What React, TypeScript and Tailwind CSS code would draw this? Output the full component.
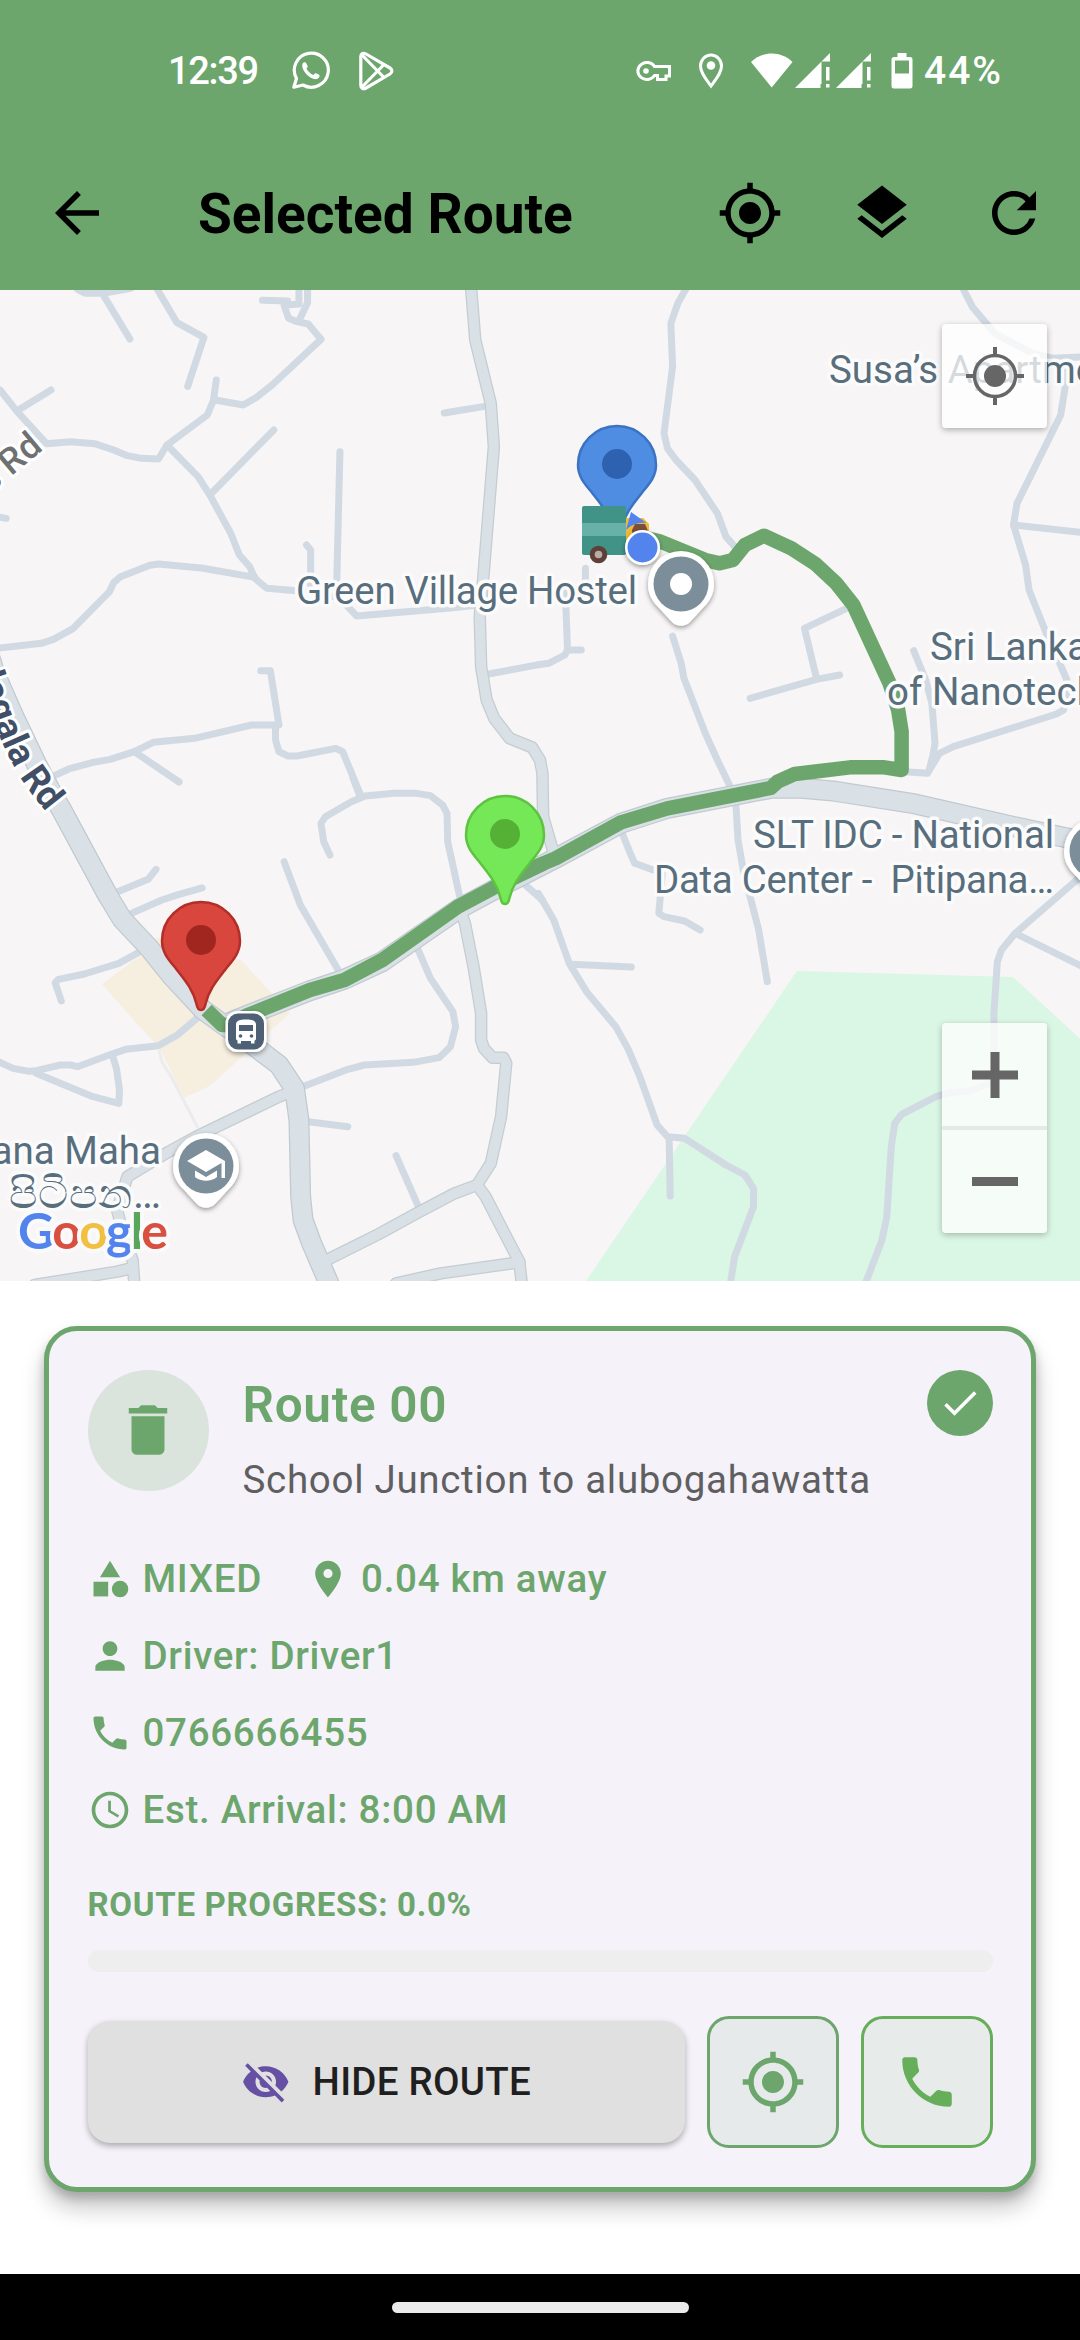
import type { ReactNode } from 'react';
import {
  MdAccessTime,
  MdArrowBack,
  MdCategory,
  MdCheck,
  MdDelete,
  MdLayers,
  MdLocationOn,
  MdMyLocation,
  MdPerson,
  MdPhone,
  MdRefresh,
  MdVisibilityOff,
} from 'react-icons/md';

const ROUTE_GREEN = '#6ca66d';

/* The map is split in four tiles; road points are in tile units. */
type Tile = {
  transform: string;
  minor: string[];
  medium: string[];
  major: string[];
  route: string;
};

const TILES: Tile[] = [
  {
    transform: 'matrix(0.34439 0 0 0.33333 0 0)',
    minor: [
      '225,-2 248,10 300,10 380,-5',
      '300,15 377,147',
      '455,-5 514,98 592,142 545,289',
      '762,31 835,33',
      '868,-5 868,42 825,46 838,85 862,95 895,102 932,148 790,285 745,322 706,345 625,330',
      '893,-5 893,38 868,92',
      '628,270 620,330 602,375 485,465 460,507 410,505 370,497 330,480 275,461 205,455 135,461 50,365 0,300',
      '50,362 148,300',
      '485,465 575,560 612,620 670,730 695,795 725,830 740,865 775,895 860,902 940,910 985,925',
      '612,612 795,420',
      '987,485 978,870 985,920 1010,950 1035,978 1300,955 1390,945',
      '890,765 902,780 902,900',
      '-10,680 18,685',
      '-10,1075 120,1060 155,1048 213,1015 318,905 330,878 350,860 435,826 460,822 585,834 740,862',
      '1290,369 1420,347',
      '1420,1152 1568,1123',
      '757,1142 785,1142 810,1305 730,1305 565,1345 445,1357 390,1385 320,1408 270,1417 200,1437 140,1465',
      '390,1385 520,1476',
      '800,1305 800,1350 810,1385 835,1398 862,1398 975,1375 995,1385 1045,1510',
    ],
    medium: [
      '1368,-5 1380,150 1425,340 1434,470 1402,880 1393,980 1397,1130 1413,1230 1435,1285 1480,1345 1545,1372 1568,1410 1575,1450 1577,1580 1605,1680',
    ],
    major: ['-45,1050 -15,1150 45,1290 105,1420 150,1510 178,1558 315,1820'],
    route: '',
  },
  {
    transform: 'matrix(0.34439 0 0 0.33333 540 0)',
    minor: [
      '-5,1124 25,1120 72,1095 80,1080 75,945 75,900',
      '80,1080 120,1080',
      '132,835 132,880',
      '425,-5 400,40 380,100 385,230 360,430 370,475 395,510 450,570 515,670 540,740 570,775',
      '1228,-5 1255,50 1320,130 1430,190 1490,205 1580,200',
      '1525,205 1525,290 1512,375 1385,640 1375,705 1410,825 1420,900 1470,1030 1505,1110 1530,1170 1530,1230 1520,1260 1500,1272 1200,1370 1160,1390 1125,1450 1060,1445',
      '1375,705 1580,728',
      '1085,1082 1120,1170 1138,1240 1147,1360 1140,1400 1130,1440',
      '895,953 768,1015 803,1165',
      '610,1225 803,1168 870,1155',
      '385,1038 410,1120 418,1165 480,1330 515,1410 550,1485 560,1510',
    ],
    medium: [],
    major: [],
    route:
      '290,740 350,755 480,810 522,820 560,810 595,765 650,737 730,775 800,822 860,880 910,945 1015,1180 1040,1260 1050,1325 1050,1440 1000,1432 900,1432 740,1452 690,1475 670,1494 370,1555 235,1597 45,1705 -110,1772',
  },
  {
    transform: 'matrix(0.34439 0 0 0.33333 0 490)',
    minor: [
      '335,338 430,298 453,268',
      '375,403 470,360 520,343 587,324',
      '415,510 345,550 245,582 170,598 160,608 178,663',
      '585,703 515,765 460,797 365,808 325,822 225,860 205,855 175,855 105,872 85,874 38,865 -5,845',
      '105,880 270,950 345,970 347,930 338,865 327,828',
      '958,225 940,185 932,130 945,110 1020,65 1060,48 1145,40 1210,40 1250,47 1285,75 1298,100 1300,185 1335,350',
      '1025,-5 1045,48',
      '825,245 872,375 985,575',
      '1210,500 1250,595 1315,695 1323,740 1308,800 1275,833 1200,847 1058,855 1010,868 875,922',
      '895,1025 1010,1040',
      '1150,1127 1215,1280',
      '1520,310 1575,360',
    ],
    medium: [
      '1335,385 1350,430 1375,560 1397,700 1397,780 1405,805 1430,833 1462,833 1470,850 1455,1010 1425,1150 1385,1215 1320,1240 1210,1300 1100,1362 945,1442',
      '1385,1215 1410,1250 1485,1400 1508,1445 1515,1510',
      '1508,1447 1280,1480 1150,1510',
      '845,935 810,950 570,1070 490,1115 370,1190 340,1290 360,1370 385,1440 390,1510',
      '380,1465 340,1475 100,1515',
    ],
    major: [
      '45,-180 105,-50 150,38 178,88 315,350 355,418 432,503 500,590 590,690 650,735 740,800 810,855 855,925 868,1020 873,1250 880,1320 905,1390 955,1510',
    ],
    route: '600,690 645,735 665,735 720,705 900,630 1000,600 1110,540 1330,380 1430,325 1580,250',
  },
  {
    transform: 'matrix(0.34439 0 0 0.33333 540 490)',
    minor: [
      '568,60 575,180 590,270 635,450 660,605',
      '235,150 260,215 275,250 355,280 345,400 360,410 420,423 465,450',
      '-5,340 40,420 85,550 135,635 220,740 255,805 290,890 340,1035 370,1070 420,1075 540,1155 595,1185 620,1225 620,1280 565,1430 553,1510',
      '90,553 265,561',
      '375,1075 378,1248',
      '1575,285 1380,460 1340,510 1328,545 1318,700 1318,905 1250,932 1190,938 1150,950 1050,1003 1030,1030 1020,1100 1007,1310 993,1380 945,1510',
      '1380,460 1580,562',
    ],
    medium: [],
    major: [
      '-918,735 -848,705 -668,632 -568,598 -458,545 -238,388 -138,332 45,235 235,130 370,85 670,25 760,25 850,33 1080,70 1400,145 1580,185',
    ],
    route: '',
  },
];

function Roads({
  kind,
  color,
  width,
}: {
  kind: 'minor' | 'medium' | 'major';
  color: string;
  width: number;
}) {
  return (
    <g fill="none" stroke={color} strokeWidth={width} strokeLinecap="round" strokeLinejoin="round">
      {TILES.map((tile) => (
        <g key={tile.transform} transform={tile.transform}>
          {tile[kind].map((points) => (
            <polyline key={points} points={points} vectorEffect="non-scaling-stroke" />
          ))}
        </g>
      ))}
    </g>
  );
}

function MarkerPin({ x, y, fill, stroke, dot }: { x: number; y: number; fill: string; stroke: string; dot: string }) {
  return (
    <g transform={`translate(${x} ${y})`}>
      <path
        d="M0 -1C-2.500 -1 -3.800 -3 -4.500 -7C-8 -22 -17 -32 -25.500 -43C-33 -52 -39 -59 -39 -70A39 39 0 0 1 39 -70C39 -59 33 -52 25.500 -43C17 -32 8 -22 4.500 -7C3.800 -3 2.500 -1 0 -1Z"
        fill={fill}
        stroke={stroke}
        strokeWidth="2.500"
      />
      <circle cy="-71" r="15" fill={dot} />
    </g>
  );
}

function PlacePin({ x, y, children }: { x: number; y: number; children: ReactNode }) {
  return (
    <g transform={`translate(${x} ${y})`}>
      <path
        d="M-33 0A33 33 0 1 1 33 0C33 11 28 18 21 25L9 38C4 43 -4 43 -9 38L-21 25C-28 18 -33 11 -33 0Z"
        fill="#fff"
        filter="url(#soft)"
      />
      <circle r="27.500" fill="#7c8e9a" />
      {children}
    </g>
  );
}

function Label({
  x,
  y,
  length,
  size = 38.5,
  anchor = 'start',
  children,
}: {
  x: number;
  y: number;
  length?: number;
  size?: number;
  anchor?: 'start' | 'end';
  children: string;
}) {
  return (
    <text
      x={x}
      y={y}
      textLength={length}
      textAnchor={anchor}
      fontSize={size}
      fill="#586e7c"
      stroke="#fbfbfc"
      strokeWidth="7"
      strokeLinejoin="round"
      paintOrder="stroke"
      xmlSpace="preserve"
    >
      {children}
    </text>
  );
}

function MapDrawing() {
  return (
    <svg viewBox="0 0 1080 991" className="block h-full w-full font-[Roboto,sans-serif]">
      <defs>
        <filter id="soft" x="-30%" y="-30%" width="160%" height="160%">
          <feDropShadow dx="0" dy="2" stdDeviation="2.500" floodOpacity="0.4" />
        </filter>
        <path id="street-curve" d="M-50 290C-22 395 0 455 17 481C27 500 35 507 46 522" />
      </defs>
      <rect width="1080" height="991" fill="#f7f5f6" />
      <path d="M797 681L1013 687L1090 758V991H586Z" fill="#daf6e4" />
      <path d="M141 665L102 694L138 735L159 757L184 808L210 796L290 723L241 670L158 647Z" fill="#f6efe0" />
      <path d="M159 760L162 772L172 788L198 838" fill="none" stroke="#ececec" strokeWidth="3" />
      <Roads kind="minor" color="#d1dae3" width={7} />
      <Roads kind="medium" color="#c3cdd2" width={12.5} />
      <Roads kind="major" color="#c0cad0" width={21} />
      <Roads kind="medium" color="#d9e0e6" width={10} />
      <Roads kind="major" color="#d9e0e6" width={18.5} />

      <g fill="none" stroke={ROUTE_GREEN} strokeWidth="14.500" strokeLinejoin="round">
        {TILES.map((tile) => (
          <g key={tile.transform} transform={tile.transform}>
            {tile.route && <polyline points={tile.route} vectorEffect="non-scaling-stroke" />}
          </g>
        ))}
      </g>

      <Label x={296} y={314} length={341}>Green Village Hostel</Label>
      <Label x={829} y={93}>Susa’s Apartments</Label>
      <Label x={930} y={370}>Sri Lanka Institute</Label>
      <Label x={887} y={415}>of Nanotechnology</Label>
      <Label x={1054} y={558} length={301} anchor="end">SLT IDC - National</Label>
      <Label x={1054} y={603} length={400} anchor="end">Data Center -  Pitipana…</Label>
      <Label x={161} y={874} anchor="end">Pitipana Maha</Label>
      <Label x={161} y={918} length={152} size={42} anchor="end">පිටිපන…</Label>

      <g stroke="#fff" strokeLinejoin="round" paintOrder="stroke">
        <text
          transform="translate(44 159) rotate(-40)"
          textAnchor="end"
          fontSize="36"
          fontWeight="500"
          fill="#6f7072"
          strokeWidth="6"
        >
          Thalagala&apos;s Rd
        </text>
        <text fontSize="37" fontWeight="700" fill="#414f66" strokeWidth="6">
          <textPath href="#street-curve" startOffset="100%" textAnchor="end">
            Thalagala Rd
          </textPath>
        </text>
      </g>

      <MarkerPin x={617} y={245} fill="#4f8de2" stroke="#3a73c4" dot="#2e62b0" />
      <MarkerPin x={505} y={615} fill="#75e858" stroke="#5dc340" dot="#55b036" />
      <MarkerPin x={201} y={721} fill="#d8463e" stroke="#b42e28" dot="#a1261f" />

      <rect x="582" y="216" width="44" height="49" rx="2" fill="#429387" />
      <rect x="582" y="233" width="44" height="13" fill="#68b1a8" />
      <path d="M626 228H643L649 234V265H626Z" fill="#efb93a" />
      <path d="M632 240L635 234H645L648 241V250H632Z" fill="#7b4f3c" />
      <circle cx="598.500" cy="264.500" r="6.300" fill="#bcaaa4" stroke="#5d4038" strokeWidth="5" />
      <path d="M631 222L646.500 233C638 232 631 235 626 240Z" fill="#5384ee" />
      <circle cx="642.500" cy="257.500" r="17.500" fill="#fff" filter="url(#soft)" />
      <circle cx="642.500" cy="257.500" r="15" fill="#5384ee" />

      <PlacePin x={681} y={294}>
        <circle r="11" fill="#fff" />
      </PlacePin>
      <PlacePin x={1097} y={561}>
        <circle r="11" fill="#fff" />
      </PlacePin>
      <PlacePin x={206} y={876}>
        <path d="M-19 -5L0 -16L19 -5V12H15.500V-3L0 6Z M-11 4.500L0 11L11 4.500V11C5 16 -5 16 -11 11Z" fill="#fff" />
      </PlacePin>

      <g transform="translate(246 741.500)">
        <rect x="-20.500" y="-20.500" width="41" height="41" rx="12" fill="#fff" filter="url(#soft)" />
        <rect x="-18" y="-18" width="36" height="36" rx="10" fill="#4d6074" />
        <path
          d="M-10 -7C-10 -11 -6 -12 0 -12S10 -11 10 -7V7C10 8.500 9 9 8.500 9V12H5V9.500H-5V12H-8.500V9C-9.500 8.500 -10 8 -10 7Z"
          fill="#fff"
        />
        <rect x="-7" y="-6.500" width="14" height="6" fill="#4d6074" />
        <circle cx="-5.500" cy="4.500" r="1.800" fill="#4d6074" />
        <circle cx="5.500" cy="4.500" r="1.800" fill="#4d6074" />
      </g>

      <text
        x="18"
        y="959"
        textLength="150"
        fontFamily="Lato, sans-serif"
        fontSize="50"
        fontWeight="700"
        stroke="#fafafb"
        strokeWidth="8"
        strokeLinejoin="round"
        paintOrder="stroke"
      >
        <tspan fill="#5384ee">G</tspan>
        <tspan fill="#d8503f">o</tspan>
        <tspan fill="#f1bf42">o</tspan>
        <tspan fill="#5384ee">g</tspan>
        <tspan fill="#58a55c">l</tspan>
        <tspan fill="#d8503f">e</tspan>
      </text>
    </svg>
  );
}

function StatusBar() {
  return (
    <div className="flex h-[136px] items-start pt-[47px] text-white">
      <span className="ml-[168px] w-[122px] text-[38px] leading-[48px] font-medium tracking-[-1.3px]">12:39</span>
      <svg viewBox="0 0 40 40" className="mt-1 h-10 w-10" fill="none" stroke="currentColor">
        <path d="M3.800 36.200L6.500 27.500A17 17 0 1 1 13 34Z" strokeWidth="3.200" strokeLinejoin="round" />
        <path
          d="M13.500 11.500C12 12.500 11.800 15 13 18C15 22.500 19 26.500 24 28C26.500 28.600 29 27.500 29.500 25.500C29.800 24 29.500 23.800 26 22.300C25 22 24.500 23 23.500 24C20.500 23 17.500 20 16.500 17.500C17.300 16.500 18 16 17.600 15L16 11.800C15.500 11 14.500 11 13.500 11.500Z"
          fill="currentColor"
          stroke="none"
        />
      </svg>
      <svg
        viewBox="0 0 36 40"
        className="ml-7 mt-1 h-10 w-9"
        fill="none"
        stroke="currentColor"
        strokeWidth="3.200"
        strokeLinejoin="round"
      >
        <path d="M2.800 5.500C2.800 2.500 5.500 1.500 8 3L32 17C34.500 18.500 34.500 21.500 32 23L8 37C5.500 38.500 2.800 37.500 2.800 34.500Z" />
        <path d="M4 4L26 26.500M4 36L26 13.500" />
      </svg>
      <svg viewBox="0 0 36 24" className="ml-[242px] mt-3 h-6 w-9" fill="none" stroke="currentColor" strokeWidth="3">
        <path d="M18.500 7.500H33.500V17H30V20.500H21.500V16.500H18.500A9 8.500 0 1 1 18.500 7.500Z" />
        <circle cx="10" cy="12" r="2.800" fill="currentColor" stroke="none" />
      </svg>
      <svg viewBox="0 0 26 36" className="ml-[26px] mt-[6px] h-9 w-[26px]" fill="none" stroke="currentColor" strokeWidth="3">
        <path d="M13 33C8 26 2.500 20 2.500 13A10.500 11 0 0 1 23.500 13C23.500 20 18 26 13 33Z" />
        <circle cx="13" cy="12.500" r="4.300" fill="currentColor" stroke="none" />
      </svg>
      <svg viewBox="0 0 121 36" className="ml-[27px] mt-[6px] h-9 w-[121px]" fill="currentColor">
        <path d="M0 9C12 -2.500 30 -2.500 41.500 9L20.700 34.500Z" />
        {[44, 85].map((x) => (
          <g key={x} transform={`translate(${x} 0)`}>
            <path d="M35 0V8.500H26.500V31H25.500V35H0Z" />
            <path d="M31 14H34.500V27.500H31ZM31 31H34.500V34.500H31Z" />
          </g>
        ))}
      </svg>
      <svg viewBox="0 0 22 36" className="ml-[19px] mt-[6px] h-9 w-[22px]" fill="currentColor">
        <path
          fillRule="evenodd"
          d="M6.500 0H15.500V4H19A2.500 2.500 0 0 1 21.500 6.500V33A2.500 2.500 0 0 1 19 35.500H3A2.500 2.500 0 0 1 0.500 33V6.500A2.500 2.500 0 0 1 3 4H6.500ZM4 7.500V20.500H18V7.500Z"
        />
      </svg>
      <span className="ml-[11px] text-[39px] leading-[48px] font-medium tracking-[2px]">44%</span>
    </div>
  );
}

function Toolbar() {
  return (
    <div className="flex h-[154px] items-center text-black">
      <MdArrowBack className="ml-11 size-[66px]" />
      <h1 className="ml-[88px] flex-1 pt-[3px] text-[55px] leading-none font-bold">Selected Route</h1>
      <div className="flex gap-[66px] pr-[33px]">
        <MdMyLocation className="size-[66px]" />
        <MdLayers className="size-[66px]" />
        <MdRefresh className="size-[66px]" />
      </div>
    </div>
  );
}

function MapControls() {
  return (
    <div className="absolute inset-y-0 right-[33px] flex w-[105px] flex-col justify-between pt-[34px] pb-12 text-[#666666]">
      <button className="flex h-[104px] items-center justify-center rounded-[4px] bg-white/75 shadow-[0_2px_6px_rgba(0,0,0,0.3)]">
        <svg viewBox="0 0 60 60" className="size-[60px]" fill="none" stroke="currentColor">
          <circle cx="30" cy="30" r="20.500" strokeWidth="3.500" />
          <circle cx="30" cy="30" r="11" fill="currentColor" stroke="none" />
          <path d="M30 1V9M30 51V59M1 30H9M51 30H59" strokeWidth="4" />
        </svg>
      </button>
      <div className="flex h-[210px] flex-col rounded-[4px] bg-white/75 shadow-[0_2px_6px_rgba(0,0,0,0.25)]">
        <button className="flex flex-1 items-center justify-center border-b-[4px] border-[#e2ece5]">
          <svg viewBox="0 0 46 46" className="size-[46px]" stroke="currentColor" strokeWidth="9">
            <path d="M23 0V46M0 23H46" />
          </svg>
        </button>
        <button className="flex flex-1 items-center justify-center">
          <span className="h-[9px] w-[46px] bg-[#666666]" />
        </button>
      </div>
    </div>
  );
}

function Detail({ icon, children }: { icon: ReactNode; children: ReactNode }) {
  return (
    <div className="flex h-[77px] items-center gap-[11px] text-[38.5px] font-medium tracking-[0.7px] whitespace-nowrap">
      {icon}
      <span>{children}</span>
    </div>
  );
}

function RouteCard() {
  return (
    <article className="mx-11 mt-[45px] h-[866px] rounded-[33px] border-[5.5px] border-[#6ca66d] bg-[#f5f2f9] px-[38.5px] pt-[38.5px] text-[#6ca66d] shadow-[0_16px_22px_rgba(0,0,0,0.22),0_6px_10px_rgba(0,0,0,0.18)]">
      <header className="flex h-[165px] items-start">
        <div className="flex size-[121px] items-center justify-center rounded-full bg-[#dae4dc]">
          <MdDelete className="size-[66px]" />
        </div>
        <div className="ml-[34px] flex-1 pt-px">
          <h2 className="text-[49.5px] leading-[68px] font-semibold tracking-[0.7px]">Route 00</h2>
          <p className="mt-[15px] text-[38.5px] leading-[52px] tracking-[0.7px] text-[#5f5f61]">
            School Junction to alubogahawatta
          </p>
        </div>
        <div className="flex size-[66px] items-center justify-center rounded-full bg-[#6ca66d]">
          <MdCheck className="size-11 text-white" />
        </div>
      </header>

      <div className="mt-[6px] flex gap-11">
        <Detail icon={<MdCategory className="size-11" />}>MIXED</Detail>
        <Detail icon={<MdLocationOn className="size-11" />}>0.04 km away</Detail>
      </div>
      <Detail icon={<MdPerson className="size-11" />}>Driver: Driver1</Detail>
      <Detail icon={<MdPhone className="size-11" />}>0766666455</Detail>
      <Detail icon={<MdAccessTime className="size-11" />}>Est. Arrival: 8:00 AM</Detail>

      <p className="mt-[34px] text-[33px] leading-[44px] font-bold tracking-[0.7px]">ROUTE PROGRESS: 0.0%</p>
      <div className="mt-[23px] h-[22px] rounded-full bg-[#eeeeee]" />

      <div className="mt-[44px] flex items-center gap-[22px]">
        <button className="flex h-[122px] flex-1 items-center justify-center gap-[22px] rounded-[22px] bg-[#e0e0e0] text-[38.5px] font-medium tracking-[0.25px] text-[#1f1f1f] shadow-[0_3px_6px_rgba(0,0,0,0.3)]">
          <MdVisibilityOff className="size-[49.5px] text-[#6550a4]" />
          HIDE ROUTE
        </button>
        <button className="flex size-[132px] items-center justify-center rounded-[22px] border-[3px] border-[#6ca66d] bg-[#e7eaeb]">
          <MdMyLocation className="size-[66px]" />
        </button>
        <button className="flex size-[132px] items-center justify-center rounded-[22px] border-[3px] border-[#67ae5b] bg-[#e7ebe9] text-[#67ae5b]">
          <MdPhone className="size-[66px]" />
        </button>
      </div>
    </article>
  );
}

export default function App() {
  return (
    <div className="flex h-[2340px] w-[1080px] flex-col overflow-hidden bg-white font-[Roboto,sans-serif]">
      <header className="bg-[#6ca66d]">
        <StatusBar />
        <Toolbar />
      </header>
      <section className="relative h-[991px] shrink-0">
        <MapDrawing />
        <MapControls />
      </section>
      <main className="h-[993px] shrink-0">
        <RouteCard />
      </main>
      <footer className="flex h-[66px] items-center justify-center bg-black">
        <span className="h-[11px] w-[297px] rounded-full bg-[#ebebeb]" />
      </footer>
    </div>
  );
}
